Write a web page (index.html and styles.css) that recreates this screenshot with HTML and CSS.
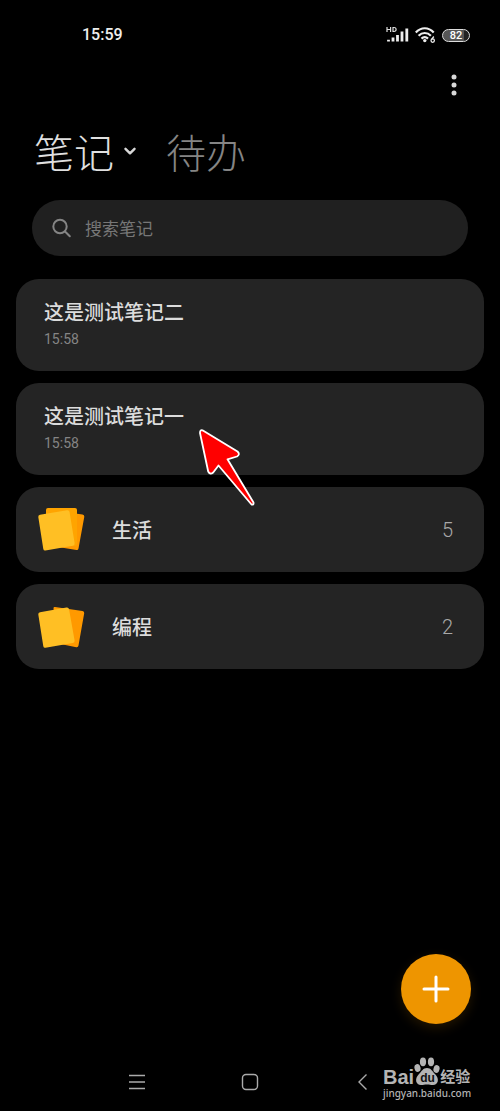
FILE: index.html
```
<!DOCTYPE html>
<html lang="zh-CN">
<head>
<meta charset="utf-8">
<meta name="viewport" content="width=device-width, initial-scale=1">
<title>笔记</title>
<link rel="stylesheet" href="styles.css">
</head>
<body>
<header class="status">
  <time class="clock">15:59</time>
  <div class="indicators">
    <svg class="signal" width="24" height="18" viewBox="0 0 24 18" aria-hidden="true">
      <path d="M1 1v5M4.600 1v5M1 3.500h3.600M7 1v5M7 1.500h1c2.800 0 2.800 4 0 4h-1" fill="none" stroke="#ddd" stroke-width="1.200"/>
      <path d="M2.500 15.500v-1.800M7 15.500v-4M11.500 15.500v-6.500M16 15.500V5.500M20.800 15.500V2.500" stroke="#eee" stroke-width="2.800"/>
    </svg>
    <svg class="wifi" width="22" height="18" viewBox="0 0 22 18" aria-hidden="true">
      <g fill="none" stroke="#eee" stroke-width="2.200">
        <path d="M.800 6.500C6 .8 13.500.8 18.700 6.500"/>
        <path d="M3.600 9.700c3.600-3.600 8.700-3.600 12.300 0"/>
        <path d="M6.500 12.600c1.900-1.900 4.600-1.900 6.500 0"/>
      </g>
      <circle cx="9.800" cy="14.600" r="1.700" fill="#eee"/>
      <path d="M18.800 10.500l-2.300 3.200" stroke="#eee" stroke-width="1.300"/>
      <circle cx="17.700" cy="14.600" r="1.700" fill="none" stroke="#eee" stroke-width="1.300"/>
    </svg>
    <span class="battery">82</span>
  </div>
</header>
<div class="toolbar">
  <button class="more" type="button" aria-label="更多">
    <svg width="8" height="24" viewBox="0 0 8 24" fill="#d8d8d8"><circle cx="4" cy="4" r="2.500"/><circle cx="4" cy="12" r="2.500"/><circle cx="4" cy="20" r="2.500"/></svg>
  </button>
</div>
<nav class="tabs">
  <button class="tab tab-active" type="button">笔记
    <svg width="12" height="8" viewBox="0 0 12 8" fill="none" stroke="#d8d8d8" stroke-width="2.400" stroke-linecap="round" stroke-linejoin="round"><path d="M1.500 1.800L6 6.300l4.500-4.500"/></svg>
  </button>
  <button class="tab" type="button">待办</button>
</nav>
<label class="search">
  <svg width="20" height="20" viewBox="0 0 20 20" fill="none" stroke="#858585" stroke-width="2" stroke-linecap="round"><circle cx="8" cy="8.500" r="6.700"/><path d="M13 13.500l4.800 4.800"/></svg>
  <input class="search-input" type="search" placeholder="搜索笔记" aria-label="搜索笔记">
</label>
<main class="list">
  <article class="card note">
    <h2 class="title">这是测试笔记二</h2>
    <time class="date">15:58</time>
  </article>
  <article class="card note">
    <h2 class="title">这是测试笔记一</h2>
    <time class="date">15:58</time>
    <svg class="pointer" width="60" height="80" viewBox="0 0 60 80" aria-hidden="true"><path d="M4.500 1.300L39.500 22.500q3 3-.5 5L29.500 30.300 55.500 73.500q.5 2.500-2 2L20.500 36.500l-5.300 7q-3.200 2.500-5-1L2 4Q2 .5 4.500 1.300z" fill="#f00" stroke="#fff" stroke-width="1.800" stroke-linejoin="round"/></svg>
  </article>
  <section class="card folder">
    <svg width="48" height="46" viewBox="0 0 48 46" aria-hidden="true">
      <path d="M19.500 4L44.500 7.500q2 .3 1.800 2.300L40.500 41.500q-.3 1.800-2 1.500L20 40z" fill="#f90"/>
      <rect x="8" y="1" width="31" height="38" rx="2" fill="#ffa400"/>
      <path d="M2 7.700L29 3.200q2-.3 2.500 1.500L36.600 36q.3 2.400-1.800 2.800L7.500 43.500q-1.800.3-2.200-1.500L.3 10Q.100 8 2 7.700z" fill="#ffbf24"/>
    </svg>
    <h2 class="title">生活</h2>
    <span class="count">5</span>
  </section>
  <section class="card folder">
    <svg width="48" height="46" viewBox="0 0 48 46" aria-hidden="true">
      <path d="M15.500 4.500q-.3-2 1.500-1.500L44.500 7q2 .4 1.700 2.300L40.500 41.500q-.3 2-2.200 1.700L20 39.500z" fill="#f90"/>
      <path d="M2 8.200L28.500 3.500q2-.3 2.500 1.500L36.600 36.500q.3 2.200-1.800 2.600L7.500 43.700q-1.800.3-2.200-1.500L.3 10.500Q.100 8.500 2 8.200z" fill="#ffbf24"/>
    </svg>
    <h2 class="title">编程</h2>
    <span class="count">2</span>
  </section>
</main>
<button class="add" type="button" aria-label="新建">
  <svg width="28" height="28" viewBox="0 0 28 28" stroke="#fff" stroke-width="3" stroke-linecap="round"><path d="M14 2v24M2 14h24"/></svg>
</button>
<footer class="system">
  <button type="button" aria-label="任务"><svg width="18" height="18" viewBox="0 0 18 18" stroke="#aaa" stroke-width="1.400"><path d="M1 2.500h16M1 9h16M1 15.500h16"/></svg></button>
  <button type="button" aria-label="主页"><svg width="18" height="18" viewBox="0 0 18 18" fill="none" stroke="#aaa" stroke-width="1.400"><rect x="1.500" y="1.500" width="15" height="15" rx="3.500"/></svg></button>
  <button type="button" aria-label="返回"><svg width="18" height="18" viewBox="0 0 18 18" fill="none" stroke="#aaa" stroke-width="1.400"><path d="M12.500 1.500L5 9l7.500 7.500"/></svg></button>
</footer>
<div class="watermark">
  <div class="brand">
    <span class="bai">Bai</span>
    <span class="paw">
      <svg width="26" height="29" viewBox="0 0 26 29" fill="#b4b4b4" aria-hidden="true"><ellipse cx="9" cy="4.800" rx="3.100" ry="4.400"/><ellipse cx="17" cy="4.800" rx="3.100" ry="4.400"/><ellipse cx="3.500" cy="11" rx="3" ry="4" transform="rotate(-15 3.500 11)"/><ellipse cx="22.500" cy="12" rx="3" ry="4" transform="rotate(15 22.500 12)"/><path d="M13 11c4 0 5 3 8 6 5 5 3 11-2 11-3 0-3-.5-6-.5s-3 .5-6 .5c-5 0-7-6-2-11 3-3 4-6 8-6z"/></svg>
      <span class="du">du</span>
    </span>
    <span class="jingyan">经验</span>
  </div>
  <div class="url">jingyan.baidu.com</div>
</div>
</body>
</html>
```
FILE: styles.css
```
* { box-sizing: border-box; }
body {
  margin: 0;
  min-height: 100vh;
  display: flex;
  flex-direction: column;
  position: relative;
  background: #000;
  color: #e0e0e0;
  font-family: "Noto Sans CJK SC", "Noto Sans", sans-serif;
}
button {
  display: flex;
  align-items: center;
  justify-content: center;
  margin: 0;
  padding: 0;
  border: 0;
  background: none;
  color: inherit;
  font: inherit;
}
svg { display: block; flex: none; }
.status {
  height: 70px;
  padding: 0 30px 0 82px;
  display: flex;
  align-items: center;
  justify-content: space-between;
}
.clock { font: 500 16px/24px Roboto, "Noto Sans", sans-serif; color: #eee; }
.indicators { display: flex; align-items: center; gap: 5px; }
.battery {
  width: 28px;
  height: 13px;
  border: 1px solid #ddd;
  border-radius: 7px;
  background: linear-gradient(90deg, #555 80%, #222 80%);
  color: #fff;
  font: 500 11px/11px Roboto, "Noto Sans", sans-serif;
  text-align: center;
}
.toolbar { height: 30px; padding: 0 34px; display: flex; justify-content: flex-end; align-items: center; }
.more { width: 24px; height: 30px; }
.tabs { height: 100px; padding: 2px 34px 0; display: flex; align-items: center; gap: 30px; }
.tab { gap: 10px; font-size: 40px; line-height: 60px; font-weight: 200; color: #858585; }
.tab-active { color: #e0e0e0; }
.search {
  height: 56px;
  margin: 0 32px;
  padding: 0 20px;
  border-radius: 28px;
  background: #202020;
  display: flex;
  align-items: center;
  gap: 13px;
}
.search-input {
  flex: 1;
  min-width: 0;
  padding: 0;
  border: 0;
  outline: 0;
  background: none;
  color: #e0e0e0;
  font: 400 17px/24px "Noto Sans CJK SC", sans-serif;
}
.search-input::placeholder { color: #777; opacity: 1; }
.list { flex: 1; padding: 23px 16px 0; display: flex; flex-direction: column; gap: 12px; }
.card { border-radius: 23px; background: #242424; }
.note { position: relative; height: 92px; padding: 18px 28px; }
.title { margin: 0; font-size: 20px; line-height: 30px; font-weight: 500; color: #dcdcdc; }
.date { display: block; font: 400 14px/24px Roboto, "Noto Sans", sans-serif; color: #858585; }
.pointer { position: absolute; left: 182px; top: 46px; z-index: 1; }
.folder { height: 85px; padding: 0 31px 0 22px; display: flex; align-items: center; gap: 26px; }
.count { margin-left: auto; font: 300 20px/30px Roboto, "Noto Sans", sans-serif; color: #a8a8a8; }
.add {
  position: absolute;
  right: 29px;
  bottom: 87px;
  width: 70px;
  height: 70px;
  border-radius: 50%;
  background: #ee9500;
  box-shadow: 0 4px 12px rgba(238, 149, 0, 0.15);
}
.system { height: 58px; padding: 0 80px; display: grid; grid-template-columns: repeat(3, 1fr); }
.watermark { position: absolute; right: 27px; bottom: 11px; width: 90px; color: #b4b4b4; }
.brand { height: 29px; display: flex; align-items: flex-end; }
.bai { font: 700 20px/18px "Liberation Sans", sans-serif; }
.paw { position: relative; }
.du { position: absolute; left: 6px; top: 14px; color: #111; font: 700 12px/14px "Liberation Sans", sans-serif; }
.jingyan { font-size: 15px; line-height: 20px; font-weight: 700; }
.url { font: 500 10px/14px "Noto Sans", sans-serif; white-space: nowrap; }
```
